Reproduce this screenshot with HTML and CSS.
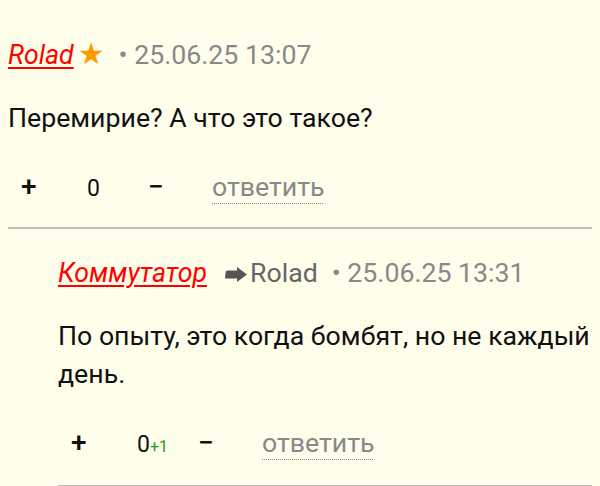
FILE: index.html
```html
<!DOCTYPE html>
<html>
<head>
<meta charset="utf-8">
<link rel="stylesheet" href="styles.css">
</head>
<body>
<div class="comment">
  <div class="head">
    <a class="author">Rolad</a><span class="star">★</span>
    <span class="date">• 25.06.25 13:07</span>
  </div>
  <div class="text">Перемирие? А что это такое?</div>
  <div class="actions">
    <span class="plus">+</span>
    <span class="score">0</span>
    <span class="minus">−</span>
    <span class="reply">ответить</span>
  </div>
</div>
<div class="comment nested">
  <div class="head">
    <a class="author">Коммутатор</a>
    <span class="to"><svg class="arrow" viewBox="0 0 22 15" width="22" height="15"><path d="M2 3.5 H12 V0 L22 7.5 L12 15 V11.5 H0 L0.6 5.5 Q1 3.5 2 3.5 Z" fill="#555"/></svg>Rolad</span>
    <span class="date">• 25.06.25 13:31</span>
  </div>
  <div class="text">По опыту, это когда бомбят, но не каждый день.</div>
  <div class="actions">
    <span class="plus">+</span>
    <span class="score">0<span class="delta">+1</span></span>
    <span class="minus">−</span>
    <span class="reply">ответить</span>
  </div>
</div>
</body>
</html>
```
FILE: styles.css
```css
html, body {
  background: #fefeea;
}
body {
  margin: 0;
  padding: 9px 8px 0;
  font-family: Roboto, "Noto Sans", sans-serif;
  font-size: 26.7px;
  color: #111;
}
.comment {
  padding-top: 27px;
  border-bottom: 2px solid #bbbbb0;
}
.nested {
  margin-left: 50px;
  padding-top: 26px;
}
.head {
  display: flex;
  align-items: baseline;
  line-height: 36px;
}
.author {
  color: #f00;
  font-style: italic;
  text-decoration: underline;
  text-underline-offset: 3px;
  text-decoration-thickness: 2px;
}
.star {
  color: #f90;
  margin-left: 4px;
  font-family: "DejaVu Sans", sans-serif;
  font-size: 30px;
}
.date {
  color: #888;
  margin-left: 14px;
}
.to {
  color: #666;
  margin-left: 18px;
}
.arrow {
  margin-right: 3px;
}
.text {
  margin-top: 26px;
  line-height: 38px;
}
.actions {
  display: flex;
  align-items: baseline;
  line-height: 30px;
  padding: 35px 0 23px;
}
.plus {
  margin-left: 13px;
  width: 66px;
  font-weight: 500;
  font-size: 28px;
}
.score {
  width: 61px;
  font-size: 23px;
}
.delta {
  color: #229922;
  font-size: 16px;
}
.minus {
  width: 64px;
  font-weight: 500;
  font-size: 28px;
}
.reply {
  color: #888;
  text-decoration: underline dotted #888;
  text-decoration-thickness: 1px;
  text-underline-offset: 7px;
}
```
